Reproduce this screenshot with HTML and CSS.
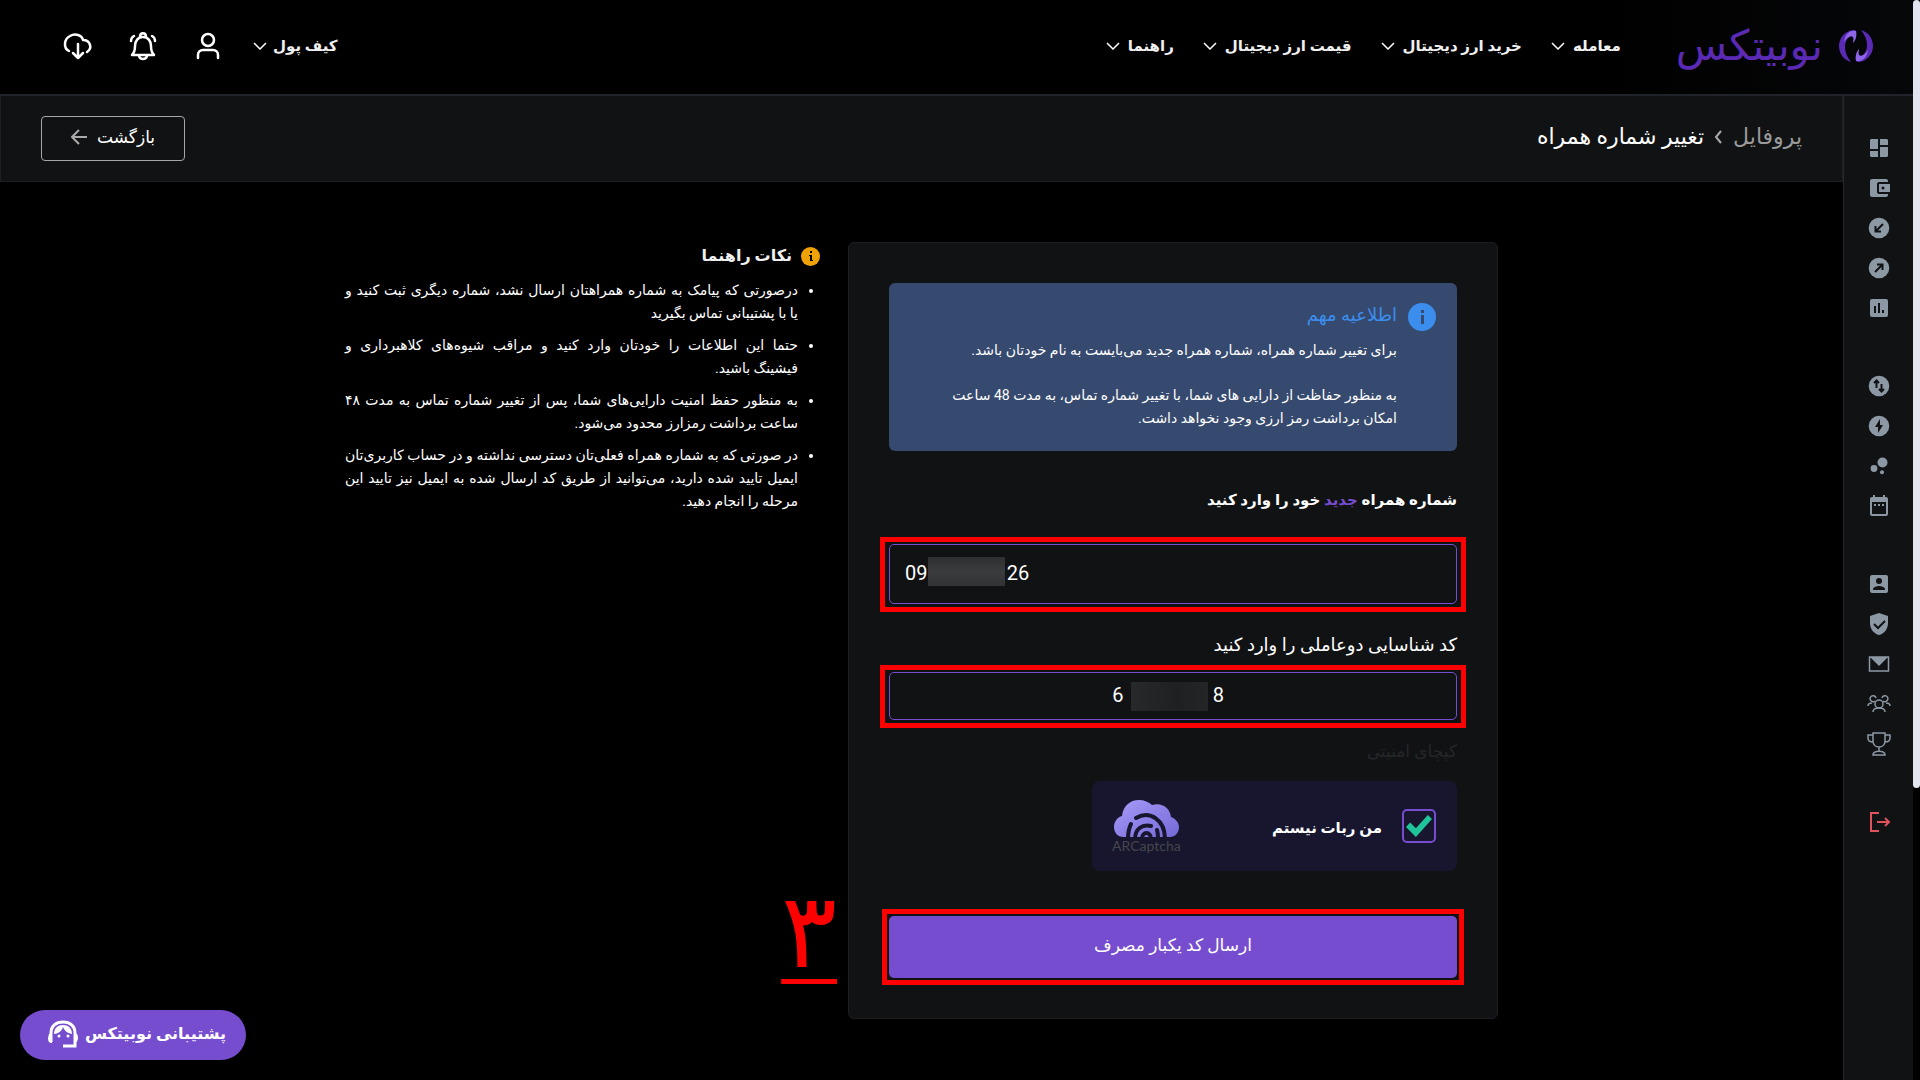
FILE: index.html
```html
<!DOCTYPE html>
<html lang="fa" dir="rtl">
<head>
    <meta charset="UTF-8">
    <meta name="viewport" content="width=device-width, initial-scale=1.0">
    <title>تغییر شماره همراه | نوبیتکس</title>
    <link rel="stylesheet" href="styles.css">
</head>
<body>
    <div class="scroll-track"><div class="scroll-thumb"></div></div>

    <div class="page">
        <header class="topbar">
            <a class="logo" href="#">
                <svg width="34" height="32" viewBox="0 0 34 32">
                    <path d="M16 0C6 0 0 8 0 16c0 8 5 14 12 16C8 27 6 22 6 17 6 10 10 5 16 5z" fill="#5a2ab5"/>
                    <path d="M17 1C10 0 6 5 5 12c3-5 7-7 9-5 1 2 0 4 0 6 3-3 4-8 3-12z" fill="#8f66ea"/>
                    <path d="M18 32c10 0 16-8 16-16 0-8-5-14-12-16 4 5 6 10 6 15 0 7-4 12-10 12z" fill="#5a2ab5"/>
                    <path d="M17 31c7 1 11-4 12-11-3 5-7 7-9 5-1-2 0-4 0-6-3 3-4 8-3 12z" fill="#8f66ea"/>
                </svg>
                <span>نوبیتکس</span>
            </a>
            <nav class="menu">
                <a href="#">معامله <svg width="14" height="8" viewBox="0 0 14 8"><path d="M1 1l6 6 6-6"/></svg></a>
                <a href="#">خرید ارز دیجیتال <svg width="14" height="8" viewBox="0 0 14 8"><path d="M1 1l6 6 6-6"/></svg></a>
                <a href="#">قیمت ارز دیجیتال <svg width="14" height="8" viewBox="0 0 14 8"><path d="M1 1l6 6 6-6"/></svg></a>
                <a href="#">راهنما <svg width="14" height="8" viewBox="0 0 14 8"><path d="M1 1l6 6 6-6"/></svg></a>
            </nav>
            <div class="tools">
                <a href="#">کیف پول <svg width="14" height="8" viewBox="0 0 14 8"><path d="M1 1l6 6 6-6"/></svg></a>
                <button class="icon-btn" aria-label="حساب کاربری">
                    <svg width="30" height="30" viewBox="0 0 30 30"><circle cx="15" cy="9" r="6"/><path d="M5 27v-3c0-3 2-5 5-5h10c3 0 5 2 5 5v3"/></svg>
                </button>
                <button class="icon-btn" aria-label="اعلان‌ها">
                    <svg width="30" height="30" viewBox="0 0 30 30"><path d="M4 24h22c-2-2-3-5-3-9 0-5-3-9-8-9s-8 4-8 9c0 4-1 7-3 9z"/><path d="M12 6c0-5 6-5 6 0M11 25c1 4 7 4 8 0M3 10c0-2 1-4 3-5M27 10c0-2-1-4-3-5"/></svg>
                </button>
                <button class="icon-btn" aria-label="دریافت">
                    <svg width="30" height="30" viewBox="0 0 30 30"><path d="M6 20C0 17 1 8 7 5c5-3 12-1 13 4 7 0 10 8 4 12M15 13v14M10 22l5 5 5-5"/></svg>
                </button>
            </div>
        </header>

        <div class="body">
            <aside class="sidebar">
                <div class="side-group">
                    <a href="#" aria-label="داشبورد"><svg viewBox="0 0 24 24"><path d="M4 3h7v10H3V4zM3 15h8v6H4l-1-1zM13 11h8v9l-1 1h-7zM13 3h7l1 1v5h-8z"/></svg></a>
                    <a href="#" aria-label="کیف پول"><svg viewBox="0 0 24 24"><path d="M21 18v1c0 1.100-.9 2-2 2H5c-1.100 0-2-.9-2-2V5c0-1.100.9-2 2-2h14c1.100 0 2 .9 2 2v1h-9c-1.100 0-2 .9-2 2v8c0 1.100.9 2 2 2h9zm-9-2h11V8H12v8zm4-2.500a1.500 1.500 0 1 1 0-3 1.500 1.500 0 0 1 0 3z"/></svg></a>
                    <a href="#" aria-label="واریز"><svg viewBox="0 0 24 24"><circle cx="12" cy="12" r="10.300"/><path class="cut" d="M16 8l-7 7M8.500 10v5.500H14"/></svg></a>
                    <a href="#" aria-label="برداشت"><svg viewBox="0 0 24 24"><circle cx="12" cy="12" r="10.300"/><path class="cut" d="M8 16l7-7M10 8.500h5.500V14"/></svg></a>
                    <a href="#" aria-label="گزارش"><svg viewBox="0 0 24 24"><rect x="3" y="3" width="18" height="18" rx="2"/><path class="cut" d="M8 10v7M12 7v10M16 14v3"/></svg></a>
                </div>
                <div class="side-group">
                    <a href="#" aria-label="تبدیل"><svg viewBox="0 0 24 24"><circle cx="12" cy="12" r="10.300"/><path class="cut" d="M9.500 14V7M7 9l2.500-2.500L12 9M14.500 10v7M12 15l2.500 2.500L17 15"/></svg></a>
                    <a href="#" aria-label="معامله سریع"><svg viewBox="0 0 24 24"><circle cx="12" cy="12" r="10.300"/><path class="hole" d="M13 5l-5 8h3v6l5-8h-3z"/></svg></a>
                    <a href="#" aria-label="بازار"><svg viewBox="0 0 24 24"><circle cx="15.500" cy="8.500" r="5"/><circle cx="7" cy="14.500" r="3.400"/><circle cx="15" cy="18.300" r="2"/></svg></a>
                    <a href="#" aria-label="تقویم"><svg viewBox="0 0 24 24"><path d="M19 3h-1V1h-2v2H8V1H6v2H5a2 2 0 0 0-2 2v15a2 2 0 0 0 2 2h14a2 2 0 0 0 2-2V5a2 2 0 0 0-2-2zm0 17H5V8h14v12z"/><path d="M7 10h2v2H7zM11 10h2v2h-2zM15 10h2v2h-2z"/></svg></a>
                </div>
                <div class="side-group">
                    <a href="#" aria-label="پروفایل"><svg viewBox="0 0 24 24"><rect x="3" y="3" width="18" height="18" rx="2"/><circle class="hole" cx="12" cy="9" r="3"/><path class="hole" d="M6 18v-1c0-2 4-3.100 6-3.100s6 1.100 6 3.100v1z"/></svg></a>
                    <a href="#" aria-label="امنیت"><svg viewBox="0 0 24 24"><path d="M12 1L3 4v7c0 6 4 11 9 12 5-1 9-6 9-12V4z"/><path class="cut" d="M7 12l4 4 7-7"/></svg></a>
                    <a href="#" aria-label="پیام‌ها"><svg viewBox="0 0 24 24"><path class="line" d="M2.500 5h19v14h-19z"/><path d="M3 5h18l-9 9z"/></svg></a>
                    <a href="#" aria-label="معرفی دوستان"><svg viewBox="0 0 24 24"><path class="line" d="M6 20c0-3 3-4 6-4s6 1 6 4M1 14c0-2 1-3 4-3M23 14c0-2-1-3-4-3M8 9a3 3 0 1 1 1-3M16 9a3 3 0 1 0-1-3"/><circle class="line" cx="12" cy="12" r="4"/></svg></a>
                    <a href="#" aria-label="جوایز"><svg viewBox="0 0 24 24"><path class="line" d="M6 1h12v8c0 8-12 8-12 0zM6 3H1v3c0 3 2 4 5 4M18 3h5v3c0 3-2 4-5 4M12 15v4M6 23c0-5 12-5 12 0z"/></svg></a>
                </div>
                <div class="side-group">
                    <a class="exit" href="#" aria-label="خروج"><svg viewBox="0 0 24 24"><path class="line" d="M12 3H4v18h8M10 12h12M18 8l4 4-4 4"/></svg></a>
                </div>
            </aside>

            <main>
                <div class="title-bar">
                    <h1><a href="#">پروفایل</a><svg width="9" height="14" viewBox="0 0 9 14"><path d="M7 1L2 7l5 6"/></svg>تغییر شماره همراه</h1>
                    <button class="back">بازگشت<svg width="17" height="16" viewBox="0 0 17 16"><path d="M16 8H1M8 1L1 8l7 7"/></svg></button>
                </div>

                <div class="content">
                    <form class="card">
                        <div class="alert">
                            <svg width="28" height="28" viewBox="0 0 28 28"><circle cx="14" cy="14" r="14" fill="#3b8eee"/><path d="M13 7h3v3h-3zM13 12h3v9h-3z" fill="#36496e"/></svg>
                            <div>
                                <h2>اطلاعیه مهم</h2>
                                <p>برای تغییر شماره همراه، شماره همراه جدید می‌بایست به نام خودتان باشد.</p>
                                <p>به منظور حفاظت از دارایی های شما، با تغییر شماره تماس، به مدت 48 ساعت<br>امکان برداشت رمز ارزی وجود نخواهد داشت.</p>
                            </div>
                        </div>

                        <label class="label-strong" for="mobile">شماره همراه <span>جدید</span> خود را وارد کنید</label>
                        <div class="highlight">
                            <input class="mobile" id="mobile" type="text" dir="ltr" value="09&nbsp;&nbsp;&nbsp;&nbsp;&nbsp;&nbsp;&nbsp;&nbsp;&nbsp;&nbsp;&nbsp;&nbsp;&nbsp;&nbsp;&nbsp;&nbsp;26">
                            <span class="mask mask-mobile"></span>
                        </div>

                        <label class="label" for="code">کد شناسایی دوعاملی را وارد کنید</label>
                        <div class="highlight">
                            <input class="code" id="code" type="text" dir="ltr" value="6&nbsp;&nbsp;&nbsp;&nbsp;&nbsp;&nbsp;&nbsp;&nbsp;&nbsp;&nbsp;&nbsp;&nbsp;&nbsp;&nbsp;&nbsp;&nbsp;&nbsp;&nbsp;8&nbsp;&nbsp;">
                            <span class="mask mask-code"></span>
                        </div>

                        <p class="captcha-title">کپچای امنیتی</p>
                        <div class="captcha">
                            <input id="robot" type="checkbox" checked>
                            <label for="robot">من ربات نیستم</label>
                            <div class="captcha-brand">
                                <svg width="65" height="38" viewBox="0 0 65 38">
                                    <defs><linearGradient id="cloud" x1="0" y1="0" x2="1" y2="1"><stop offset="0" stop-color="#a79bf8"/><stop offset="1" stop-color="#7468d8"/></linearGradient></defs>
                                    <path d="M10 37C3 37 0 32 0 27c0-6 4-10 8-11C9 6 16 0 25 0c5 0 10 2 13 5 9-3 18 2 19 12 5 2 8 6 8 10 0 6-4 10-9 10z" fill="url(#cloud)"/>
                                    <g fill="none" stroke="#17162e" stroke-width="4" stroke-linecap="round">
                                        <path d="M14 39c0-6 1-11 3-15M22 18c14-8 29 2 29 21"/>
                                        <path d="M21 39c0-10 7-15 16-13M43 30c1 3 1 6 1 9"/>
                                        <path d="M28 39c0-8 9-8 9 0"/>
                                    </g>
                                </svg>
                                <span>ARCaptcha</span>
                            </div>
                        </div>

                        <div class="highlight highlight-btn">
                            <button class="submit" type="button">ارسال کد یکبار مصرف</button>
                            <span class="step">۳</span>
                        </div>
                    </form>

                    <section class="help">
                        <h2><svg width="19" height="19" viewBox="0 0 19 19"><circle cx="9.500" cy="9.500" r="9.500" fill="#f0a106"/><path d="M9 4h2v2H9zM8 8h3v5h1v1H9V9H8z" fill="#000"/></svg>نکات راهنما</h2>
                        <ul>
                            <li><span>درصورتی که پیامک به شماره همراهتان ارسال نشد، شماره دیگری ثبت کنید و</span> یا با پشتیبانی تماس بگیرید</li>
                            <li><span>حتما این اطلاعات را خودتان وارد کنید و مراقب شیوه‌های کلاهبرداری و</span> فیشینگ باشید.</li>
                            <li><span>به منظور حفظ امنیت دارایی‌های شما، پس از تغییر شماره تماس به مدت ۴۸</span> ساعت برداشت رمزارز محدود می‌شود.</li>
                            <li><span>در صورتی که به شماره همراه فعلی‌تان دسترسی نداشته و در حساب کاربری‌تان</span> <span>ایمیل تایید شده دارید، می‌توانید از طریق کد ارسال شده به ایمیل نیز تایید این</span> مرحله را انجام دهید.</li>
                        </ul>
                    </section>
                </div>
            </main>
        </div>
    </div>

    <button class="support">پشتیبانی نوبیتکس
        <svg width="32" height="28" viewBox="0 0 32 28"><path d="M4 22V13C4 6 9 2 16 2s12 4 12 11v13H16" fill="none" stroke="#fff" stroke-width="3"/><path d="M2 14h3v9C2 23 1 21 1 18zM27 14h3c2 3 1 9-3 9zM7 14c0-6 4-9 9-9s9 3 9 9c-5-1-7-3-9-7-1 4-5 7-9 7z" fill="#fff"/><circle cx="12" cy="16" r="1.500" fill="#fff"/><circle cx="21" cy="16" r="1.500" fill="#fff"/></svg>
    </button>
</body>
</html>
```
FILE: styles.css
```css
* {
    box-sizing: border-box;
}

body {
    margin: 0;
    min-height: 100vh;
    display: flex;
    background-color: #000;
    color: #f0f0f0;
    font-family: Roboto, "DejaVu Sans", sans-serif;
    font-size: 14px;
}

a {
    color: inherit;
    text-decoration: none;
}

button, input {
    font-family: inherit;
    color: inherit;
}

button {
    cursor: pointer;
}

svg {
    flex: none;
}

h1, h2, p, ul {
    margin: 0;
    padding: 0;
}

.scroll-track {
    width: 7px;
    flex: none;
}

.scroll-thumb {
    height: 73vh;
    background-color: #e2e6f0;
    border-radius: 4px;
}

.page {
    flex: 1;
    display: flex;
    flex-direction: column;
}

/* top bar */
.topbar {
    height: 96px;
    display: flex;
    align-items: center;
    padding: 0 40px 2px 63px;
    background: linear-gradient(to left, #060709, #000 300px);
    border-bottom: 2px solid #20242a;
}

.logo {
    display: flex;
    align-items: center;
    gap: 16px;
    color: #5a2ab5;
    font-size: 42px;
    line-height: 40px;
}

.menu {
    display: flex;
    gap: 29px;
    margin-right: 55px;
}

.menu a, .tools a {
    display: flex;
    align-items: center;
    gap: 8px;
    font-size: 15px;
    font-weight: bold;
    line-height: 24px;
    white-space: nowrap;
}

.menu svg, .tools svg {
    fill: none;
    stroke: #fff;
    stroke-width: 1.5;
}

.tools {
    display: flex;
    align-items: center;
    gap: 35px;
    margin-right: auto;
}

.tools a {
    gap: 6px;
    margin-left: -5px;
}

.icon-btn {
    width: 30px;
    height: 30px;
    padding: 0;
    border: none;
    background: none;
}

.icon-btn svg {
    display: block;
    stroke-width: 2.5;
    stroke-linecap: round;
    stroke-linejoin: round;
}

.body {
    flex: 1;
    display: flex;
}

/* side bar */
.sidebar {
    width: 70px;
    flex: none;
    display: flex;
    flex-direction: column;
    align-items: center;
    gap: 54px;
    padding-top: 40px;
    background-color: #111214;
    border-left: 1px solid #25292e;
}

.side-group {
    display: flex;
    flex-direction: column;
    gap: 16px;
}

.side-group svg {
    display: block;
    width: 24px;
    height: 24px;
    fill: #8d98a5;
}

.side-group .cut {
    fill: none;
    stroke: #111214;
    stroke-width: 2;
}

.side-group .hole {
    fill: #111214;
}

.side-group .line {
    fill: none;
    stroke: #8d98a5;
    stroke-width: 1.5;
}

.side-group .exit .line {
    stroke: #e0525c;
    stroke-width: 2;
}

main {
    flex: 1;
}

.title-bar {
    height: 86px;
    display: flex;
    align-items: center;
    justify-content: space-between;
    padding: 0 40px;
    background-color: #111214;
    border: 1px solid #1d2024;
    border-top: none;
}

.title-bar h1 {
    display: flex;
    align-items: center;
    gap: 10px;
    padding-bottom: 4px;
    font-size: 22px;
    font-weight: normal;
    color: #fff;
}

.title-bar h1 a {
    color: #9a9a9a;
}

.title-bar svg {
    fill: none;
    stroke: #aaa;
    stroke-width: 2;
}

.back {
    width: 144px;
    height: 45px;
    display: flex;
    align-items: center;
    justify-content: center;
    gap: 9px;
    padding-bottom: 4px;
    border: 1px solid #a6a6a6;
    border-radius: 4px;
    background: none;
    font-size: 17px;
    color: #fff;
}

/* form and help */
.content {
    max-width: 1153px;
    margin: 60px auto 0;
    display: grid;
    grid-template-columns: 650fr 475fr;
    align-items: start;
    gap: 28px;
}

.card {
    padding: 40px 40px 33px;
    background-color: #111214;
    border: 1px solid #1c1e22;
    border-radius: 6px;
}

.alert {
    display: flex;
    gap: 11px;
    min-height: 168px;
    padding: 20px 21px 0;
    background-color: #36496e;
    border-radius: 6px;
}

.alert h2 {
    font-size: 18px;
    font-weight: normal;
    line-height: 24px;
    color: #3b8eee;
    margin-bottom: 12px;
}

.alert p {
    font-size: 14px;
    line-height: 23px;
    color: #fff;
}

.alert p + p {
    margin-top: 22px;
}

.label, .label-strong {
    display: block;
    font-size: 18px;
    line-height: 30px;
    color: #fff;
}

.label-strong {
    margin: 34px 0 22px;
    font-size: 15px;
    font-weight: bold;
}

.label-strong span {
    color: #774dd0;
}

.label {
    margin: 18px 0 5px;
}

.highlight {
    position: relative;
    margin: 0 -9px;
    padding: 2px 4px 3px;
    border: 5px solid #f00;
}

.highlight input {
    display: block;
    width: 100%;
    padding: 0 15px 3px;
    border: 1px solid #774dd0;
    border-radius: 5px;
    background: none;
    font-size: 20px;
    color: #fff;
}

.highlight .mobile {
    height: 60px;
}

.highlight .code {
    height: 48px;
    text-align: center;
}

.mask {
    position: absolute;
    width: 77px;
    height: 29px;
    background: linear-gradient(#2e2f30, #3a3b3c, #323334);
}

.mask-mobile {
    left: 43px;
    top: 15px;
}

.mask-code {
    left: 246px;
    top: 12px;
    background: linear-gradient(to right, #28292b, #1f2022 60%, #242527);
}

.captcha-title {
    margin: 8px 0 15px;
    font-size: 17px;
    line-height: 30px;
    color: #25272a;
}

.captcha {
    width: 365px;
    height: 90px;
    display: flex;
    align-items: center;
    padding: 0 21px 0 20px;
    background-color: #17162e;
    border-radius: 8px;
}

.captcha input {
    appearance: none;
    width: 34px;
    height: 34px;
    margin: 0;
    border: 2px solid #774dd0;
    border-radius: 5px;
}

.captcha input:checked::before {
    content: "";
    display: block;
    width: 26px;
    height: 22px;
    margin: 4px 2px;
    background-color: #20c49a;
    clip-path: polygon(0 55%, 16% 34%, 38% 60%, 84% 0, 100% 18%, 38% 100%);
}

.captcha label {
    margin-right: 20px;
    padding-top: 3px;
    font-size: 15px;
    font-weight: bold;
    color: #fff;
}

.captcha-brand {
    margin-right: auto;
    padding-top: 2px;
    display: flex;
    flex-direction: column;
    align-items: center;
    font-family: Lato, sans-serif;
    font-size: 14px;
    line-height: 16px;
    color: #45464b;
}

.highlight-btn {
    margin: 38px -7px 0;
    padding: 2px;
}

.submit {
    display: block;
    width: 100%;
    height: 62px;
    padding-bottom: 6px;
    border: none;
    border-radius: 5px;
    background-color: #774dd0;
    font-size: 17px;
    color: #fff;
}

.step {
    position: absolute;
    right: 100%;
    bottom: 4px;
    margin-right: 50px;
    font-size: 104px;
    line-height: 88px;
    color: #f00;
    text-decoration: underline;
    text-decoration-thickness: 5px;
    text-underline-offset: 12px;
}

.help h2 {
    display: flex;
    align-items: center;
    gap: 9px;
    font-size: 16px;
    font-weight: bold;
    line-height: 28px;
    margin-bottom: 9px;
}

.help ul {
    padding-right: 22px;
}

.help li {
    font-size: 14px;
    line-height: 23px;
    margin-bottom: 9px;
    color: #fff;
}

.help li span {
    display: block;
    text-align-last: justify;
}

.help li::marker {
    font-family: "DejaVu Sans", sans-serif;
}

/* support chat */
.support {
    position: fixed;
    left: 20px;
    bottom: 20px;
    width: 226px;
    height: 50px;
    display: flex;
    align-items: center;
    gap: 6px;
    padding: 0 20px 3px;
    border: none;
    border-radius: 25px;
    background-color: #774dd0;
    font-size: 16px;
    font-weight: bold;
    color: #fff;
    white-space: nowrap;
}
```
